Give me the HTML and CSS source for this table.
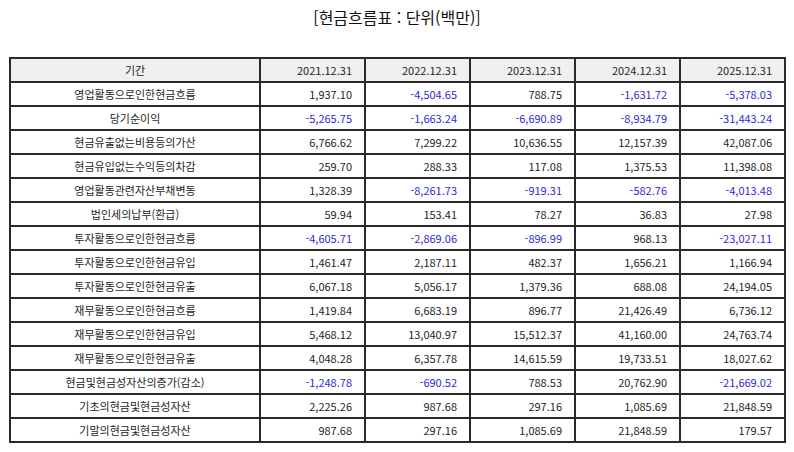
FILE: index.html
```html
<!DOCTYPE html>
<html lang="ko">
<head>
<meta charset="utf-8">
<link rel="stylesheet" href="styles.css">
</head>
<body>
<div class="page">
  <h1 class="title">[현금흐름표 : 단위(백만)]</h1>
  <table class="cf">
    <colgroup>
      <col class="c-name"><col class="c-num"><col class="c-num"><col class="c-num"><col class="c-num"><col class="c-num">
    </colgroup>
    <thead>
      <tr><th>기간</th><th>2021.12.31</th><th>2022.12.31</th><th>2023.12.31</th><th>2024.12.31</th><th>2025.12.31</th></tr>
    </thead>
    <tbody>
      <tr><td>영업활동으로인한현금흐름</td><td>1,937.10</td><td class="neg">-4,504.65</td><td>788.75</td><td class="neg">-1,631.72</td><td class="neg">-5,378.03</td></tr>
      <tr><td>당기순이익</td><td class="neg">-5,265.75</td><td class="neg">-1,663.24</td><td class="neg">-6,690.89</td><td class="neg">-8,934.79</td><td class="neg">-31,443.24</td></tr>
      <tr><td>현금유출없는비용등의가산</td><td>6,766.62</td><td>7,299.22</td><td>10,636.55</td><td>12,157.39</td><td>42,087.06</td></tr>
      <tr><td>현금유입없는수익등의차감</td><td>259.70</td><td>288.33</td><td>117.08</td><td>1,375.53</td><td>11,398.08</td></tr>
      <tr><td>영업활동관련자산부채변동</td><td>1,328.39</td><td class="neg">-8,261.73</td><td class="neg">-919.31</td><td class="neg">-582.76</td><td class="neg">-4,013.48</td></tr>
      <tr><td>법인세의납부(환급)</td><td>59.94</td><td>153.41</td><td>78.27</td><td>36.83</td><td>27.98</td></tr>
      <tr><td>투자활동으로인한현금흐름</td><td class="neg">-4,605.71</td><td class="neg">-2,869.06</td><td class="neg">-896.99</td><td>968.13</td><td class="neg">-23,027.11</td></tr>
      <tr><td>투자활동으로인한현금유입</td><td>1,461.47</td><td>2,187.11</td><td>482.37</td><td>1,656.21</td><td>1,166.94</td></tr>
      <tr><td>투자활동으로인한현금유출</td><td>6,067.18</td><td>5,056.17</td><td>1,379.36</td><td>688.08</td><td>24,194.05</td></tr>
      <tr><td>재무활동으로인한현금흐름</td><td>1,419.84</td><td>6,683.19</td><td>896.77</td><td>21,426.49</td><td>6,736.12</td></tr>
      <tr><td>재무활동으로인한현금유입</td><td>5,468.12</td><td>13,040.97</td><td>15,512.37</td><td>41,160.00</td><td>24,763.74</td></tr>
      <tr><td>재무활동으로인한현금유출</td><td>4,048.28</td><td>6,357.78</td><td>14,615.59</td><td>19,733.51</td><td>18,027.62</td></tr>
      <tr><td>현금및현금성자산의증가(감소)</td><td class="neg">-1,248.78</td><td class="neg">-690.52</td><td>788.53</td><td>20,762.90</td><td class="neg">-21,669.02</td></tr>
      <tr><td>기초의현금및현금성자산</td><td>2,225.26</td><td>987.68</td><td>297.16</td><td>1,085.69</td><td>21,848.59</td></tr>
      <tr><td>기말의현금및현금성자산</td><td>987.68</td><td>297.16</td><td>1,085.69</td><td>21,848.59</td><td>179.57</td></tr>
    </tbody>
  </table>
</div>
</body>
</html>
```

FILE: styles.css
```css
html, body {
  margin: 0;
  padding: 0;
  background: #ffffff;
}

.page {
  font-family: "Noto Sans CJK KR", "Noto Sans", sans-serif;
  color: #222;
  padding: 6px 9px 0 9px;
}

.title {
  margin: 0;
  height: 51px;
  text-align: center;
  font-size: 16px;
  font-weight: 400;
  line-height: 22px;
  color: #111;
}

.cf {
  border-collapse: collapse;
  width: 777px;
  table-layout: fixed;
  font-size: 11px;
}

.c-name { width: 250px; }
.c-num { width: 105px; }

.cf th,
.cf td {
  border: 2px solid #2a2a2a;
  height: 22px;
  padding: 0 12px 0 6px;
  line-height: 14px;
  text-align: right;
  white-space: nowrap;
  color: #1e1e1e;
}

.cf th {
  background: #f0f0f0;
  font-weight: 400;
}

.cf th:first-child,
.cf td:first-child {
  text-align: center;
  padding: 0 6px;
}

.cf td.neg {
  color: #2b2bd6;
}
```
